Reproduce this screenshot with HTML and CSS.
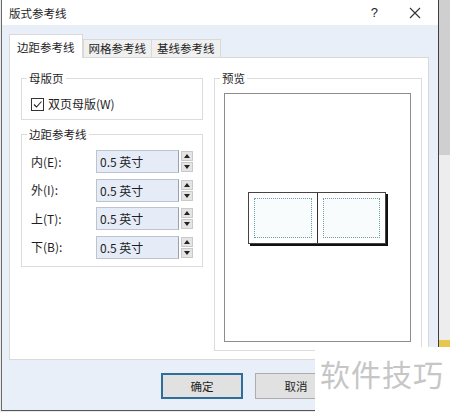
FILE: index.html
```html
<!DOCTYPE html>
<html lang="zh-CN">
<head>
  <meta charset="UTF-8" />
  <meta name="viewport" content="width=device-width, initial-scale=1.0" />
  <title>版式参考线</title>
  <link rel="stylesheet" href="styles.css">
</head>
<body>
  <div class="screen">
    <div class="dialog">
      <!-- Title bar -->
      <div class="titlebar">
        <span class="title">版式参考线</span>
        <span class="help">?</span>
        <span class="close">
          <svg width="12" height="12" viewBox="0 0 12 12"><path d="M1 1 L11 11 M11 1 L1 11" stroke="#333" stroke-width="1.1" fill="none"/></svg>
        </span>
      </div>

      <div class="dialog-body">
        <!-- Tabs -->
        <div class="tabs">
          <div class="tab active">边距参考线</div>
          <div class="tab">网格参考线</div>
          <div class="tab">基线参考线</div>
        </div>

        <div class="panel">
          <div class="col-left">
            <fieldset class="group master">
              <legend>母版页</legend>
              <label class="check">
                <span class="box">
                  <svg width="11" height="11" viewBox="0 0 11 11"><path d="M2 5.5 L4.5 8 L9.5 2.5" stroke="#222" stroke-width="1.1" fill="none"/></svg>
                </span>
                双页母版(W)
              </label>
            </fieldset>

            <fieldset class="group margins">
              <legend>边距参考线</legend>
              <div class="row">
                <span class="row-label">内(E):</span>
                <span class="field">0.5 英寸</span>
                <span class="spin"><span class="up"></span><span class="down"></span></span>
              </div>
              <div class="row">
                <span class="row-label">外(I):</span>
                <span class="field">0.5 英寸</span>
                <span class="spin"><span class="up"></span><span class="down"></span></span>
              </div>
              <div class="row">
                <span class="row-label">上(T):</span>
                <span class="field">0.5 英寸</span>
                <span class="spin"><span class="up"></span><span class="down"></span></span>
              </div>
              <div class="row">
                <span class="row-label">下(B):</span>
                <span class="field">0.5 英寸</span>
                <span class="spin"><span class="up"></span><span class="down"></span></span>
              </div>
            </fieldset>
          </div>

          <fieldset class="group preview">
            <legend>预览</legend>
            <div class="canvas">
              <div class="spread">
                <div class="page"><div class="guide"></div></div>
                <div class="page"><div class="guide"></div></div>
              </div>
            </div>
          </fieldset>
        </div>

        <!-- Buttons -->
        <div class="footer">
          <button class="btn default">确定</button>
          <button class="btn">取消</button>
        </div>
      </div>
    </div>
    <div class="backdrop"></div>
    <div class="watermark">软件技巧</div>
  </div>
</body>
</html>
```

FILE: styles.css
```css
body {
  margin: 0;
  width: 450px;
  height: 412px;
  overflow: hidden;
  background: #e9e9e9;
  font-family: "Noto Sans CJK SC", "Liberation Sans", sans-serif;
  font-size: 12px;
  color: #1e1e1e;
}
.screen {
  position: relative;
  display: flex;
  height: 412px;
  padding-left: 1px;
  box-sizing: border-box;
}
.dialog {
  width: 438px;
  height: 411px;
  box-sizing: border-box;
  border-left: 1px solid #6a6a6a;
  border-right: 1px solid #3f3f3f;
  border-bottom: 1px solid #555;
  display: flex;
  flex-direction: column;
  background: #e9eff8;
}
.backdrop {
  flex: 1;
  background: linear-gradient(#cfcfcf 0 155px, #ededed 155px 340px, #e8c750 340px);
}

/* title bar */
.titlebar {
  height: 25px;
  background: #fff;
  display: flex;
  align-items: center;
  padding-left: 7px;
}
.title {
  flex: 1;
  font-size: 11.5px;
  line-height: 16px;
}
.help {
  font-family: "Liberation Sans", sans-serif;
  font-size: 13px;
  margin-right: 31px;
}
.close {
  display: flex;
  margin-right: 17px;
}

.dialog-body {
  flex: 1;
  padding: 8px 0 0 7px;
  display: flex;
  flex-direction: column;
}

/* tabs */
.tabs {
  display: flex;
  align-items: flex-end;
  height: 24px;
}
.tab {
  height: 17px;
  line-height: 17px;
  padding: 0 5px;
  font-size: 11.5px;
  background: #f0f0f0;
  border: 1px solid #d9d9d9;
  border-bottom: none;
  margin-left: -1px;
}
.tab.active {
  height: 23px;
  line-height: 24px;
  padding: 0 7px;
  background: #fff;
  margin-left: 0;
  margin-right: 1px;
  position: relative;
  z-index: 1;
  margin-bottom: -1px;
}

.panel {
  width: 420px;
  height: 303px;
  box-sizing: border-box;
  background: #fff;
  border: 1px solid #d9d9d9;
  display: flex;
  align-items: flex-start;
  padding: 12px 0 0 11px;
  gap: 11px;
}

/* group boxes */
.group {
  margin: 0;
  border: 1px solid #dcdcdc;
  min-width: 0;
}
.group legend {
  padding: 0 2px;
  margin-left: -4px;
  line-height: 16px;
  font-size: 11.5px;
}
.col-left {
  width: 182px;
  display: flex;
  flex-direction: column;
  gap: 6px;
}
.master {
  padding: 10px 0 7px 9px;
}
.check {
  display: flex;
  align-items: center;
  gap: 4px;
  line-height: 16px;
}
.box {
  width: 11px;
  height: 11px;
  border: 1px solid #333;
  display: flex;
}

.margins {
  padding: 8px 0 7px 9px;
  display: flex;
  flex-direction: column;
  gap: 5.5px;
}
.row {
  display: flex;
  align-items: center;
  height: 23px;
}
.row-label {
  width: 65px;
  line-height: 16px;
}
.field {
  width: 78px;
  height: 21px;
  line-height: 21px;
  padding-left: 3px;
  background: #e5ecf7;
  border: 1px solid #bcc4ce;
  border-right-color: #9aa3ad;
}
.spin {
  display: flex;
  flex-direction: column;
  gap: 1px;
  margin-left: 2px;
}
.spin span {
  width: 12px;
  height: 10px;
  box-sizing: border-box;
  background: #e4e4e4;
  border: 1px solid #c9c9c9;
  display: flex;
  align-items: center;
  justify-content: center;
}
.spin .up::after {
  content: "";
  border-left: 3px solid transparent;
  border-right: 3px solid transparent;
  border-bottom: 4px solid #222;
}
.spin .down::after {
  content: "";
  border-left: 3px solid transparent;
  border-right: 3px solid transparent;
  border-top: 4px solid #222;
}

/* preview */
.preview {
  width: 208px;
  box-sizing: border-box;
  padding: 7px 10px 8px 9px;
}
.canvas {
  height: 247px;
  border: 1px solid #8d8d8d;
  display: flex;
  align-items: center;
  justify-content: center;
}
.spread {
  display: flex;
  border: 1px solid #444;
  box-shadow: 2px 2px 0 #111;
  margin-right: 2px;
}
.page {
  width: 68px;
  height: 50px;
  box-sizing: border-box;
  padding: 5px;
  background: #fff;
}
.page + .page {
  border-left: 1px solid #333;
}
.guide {
  height: 100%;
  box-sizing: border-box;
  border: 1px dotted #6d9ea4;
  background: #f8fcfc;
}

/* footer buttons */
.footer {
  display: flex;
  gap: 12px;
  padding: 13px 0 0 152px;
}
.btn {
  width: 82px;
  height: 26px;
  font: inherit;
  font-size: 11.5px;
  background: #e1e1e1;
  border: 1px solid #adadad;
  color: #1e1e1e;
}
.btn.default {
  border: 2px solid #2d6e9b;
}

.watermark {
  position: absolute;
  left: 315px;
  top: 347px;
  right: 0;
  bottom: 0;
  background: #fff;
  color: #c6c6c6;
  font-size: 30px;
  line-height: 52px;
  padding-left: 5px;
  letter-spacing: 1px;
}
```
